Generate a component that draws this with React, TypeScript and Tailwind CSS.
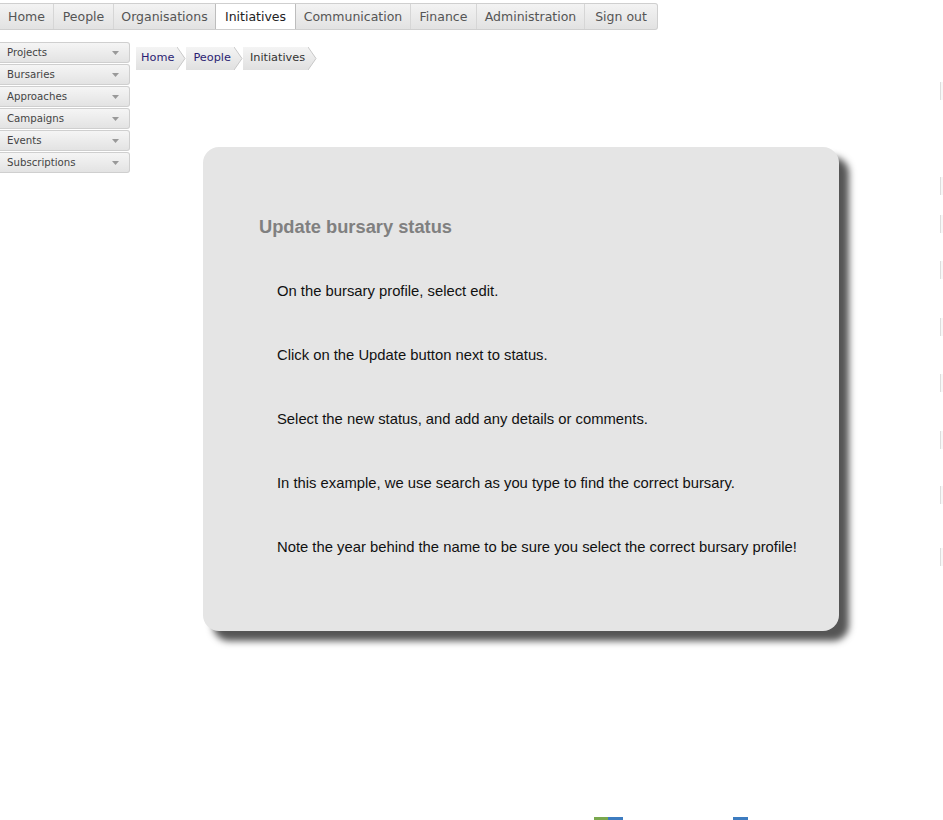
import React from "react";

const tabs = [
  { label: "Home", w: 53 },
  { label: "People", w: 60 },
  { label: "Organisations", w: 102 },
  { label: "Initiatives", w: 81, active: true },
  { label: "Communication", w: 114 },
  { label: "Finance", w: 66 },
  { label: "Administration", w: 108 },
  { label: "Sign out", w: 73 },
];

const side = ["Projects", "Bursaries", "Approaches", "Campaigns", "Events", "Subscriptions"];

const steps = [
  "On the bursary profile, select edit.",
  "Click on the Update button next to status.",
  "Select the new status, and add any details or comments.",
  "In this example, we use search as you type to find the correct bursary.",
  "Note the year behind the name to be sure you select the correct bursary profile!",
];

function Crumb({ text, first, color }: { text: string; first?: boolean; color: string }) {
  return (
    <div className="relative flex h-[23px] items-center">
      <div
        className={`flex h-full items-center bg-gradient-to-b from-[#f4f4f4] to-[#e0e0e0] ${first ? "pl-[5px]" : "pl-[7px]"} pr-[3px]`}
        style={{ color }}
      >
        {text}
      </div>
      <svg width="9" height="23" viewBox="0 0 9 23" className="block">
        <defs>
          <linearGradient id="cg" x1="0" y1="0" x2="0" y2="1">
            <stop offset="0" stopColor="#f4f4f4" />
            <stop offset="1" stopColor="#e0e0e0" />
          </linearGradient>
        </defs>
        <path d="M0 0 L8 11.5 L0 23 Z" fill="url(#cg)" />
        <path d="M0 0 L8 11.5 L0 23" fill="none" stroke="#c8c8c8" strokeWidth="1" />
      </svg>
    </div>
  );
}

export default function App() {
  return (
    <div className="relative h-[820px] w-[943px] overflow-hidden bg-white" style={{ fontFamily: "'DejaVu Sans', Verdana, sans-serif" }}>
      {/* top nav */}
      <div className="flex pt-[3px]">
        <div className="flex h-[27px] rounded-r-[3px] border-y border-r border-[#cfcfcf] bg-gradient-to-b from-[#f3f3f3] to-[#e2e2e2]">
          {tabs.map((t, i) => (
            <div
              key={t.label}
              className={`flex h-full items-center justify-center pt-[1px] text-[12.5px] ${
                t.active ? "bg-white text-[#222] border-x border-[#bdbdbd]" : "text-[#555]"
              } ${i > 0 && !t.active && !tabs[i - 1].active ? "border-l border-[#d6d6d6]" : ""}`}
              style={{ width: t.w }}
            >
              {t.label}
            </div>
          ))}
        </div>
      </div>

      <div className="flex items-start gap-[6px] pt-[11px]">
        {/* sidebar */}
        <div className="flex w-[130px] flex-col gap-[1px] pt-[1px]">
          {side.map((s) => (
            <div
              key={s}
              className="flex h-[21px] items-center justify-between rounded-r-[3px] border border-l-0 border-[#cfcfcf] bg-gradient-to-b from-[#f5f5f5] to-[#e3e3e3] pl-[7px] pr-[10px] text-[10.2px] text-[#444]"
            >
              <span>{s}</span>
              <svg width="7" height="4" viewBox="0 0 7 4">
                <path d="M0 0 L7 0 L3.5 4 Z" fill="#999" />
              </svg>
            </div>
          ))}
        </div>

        {/* breadcrumb */}
        <div className="mt-[6px] flex h-[23px] items-center text-[11.3px]">
          <Crumb text="Home" first color="#2b1e73" />
          <Crumb text="People" color="#2b1e73" />
          <Crumb text="Initiatives" color="#333" />
        </div>
      </div>

      {/* card */}
      <div className="absolute left-[203px] top-[147px] h-[484px] w-[636px] rounded-[16px] bg-[#e5e5e5] shadow-[10px_10px_7px_#555]">
        <div className="pl-[56px] pt-[66px]" style={{ fontFamily: "'Liberation Sans', Arial, sans-serif" }}>
          <div className="text-[18.3px] font-bold text-[#808080]">Update bursary status</div>
          <div className="flex flex-col gap-[45px] pl-[18px] pt-[42px] text-[14.8px] text-[#111]">
            {steps.map((s) => (
              <div key={s} className="leading-[19px]">{s}</div>
            ))}
          </div>
        </div>
      </div>

      {/* right edge faint bars */}
      {[82, 177, 215, 261, 318, 374, 431, 486, 548].map((y) => (
        <div key={y} className="absolute left-[940px] h-[18px] w-[3px] border-l border-[#ddd] bg-[#f7f7f7]" style={{ top: y }} />
      ))}

      {/* bottom fragments */}
      <div className="absolute left-[594px] top-[817px] h-[3px] w-[14px] bg-[#7aa84e]" />
      <div className="absolute left-[608px] top-[817px] h-[3px] w-[15px] bg-[#3d7cc0]" />
      <div className="absolute left-[733px] top-[817px] h-[3px] w-[15px] bg-[#3d7cc0]" />
    </div>
  );
}
